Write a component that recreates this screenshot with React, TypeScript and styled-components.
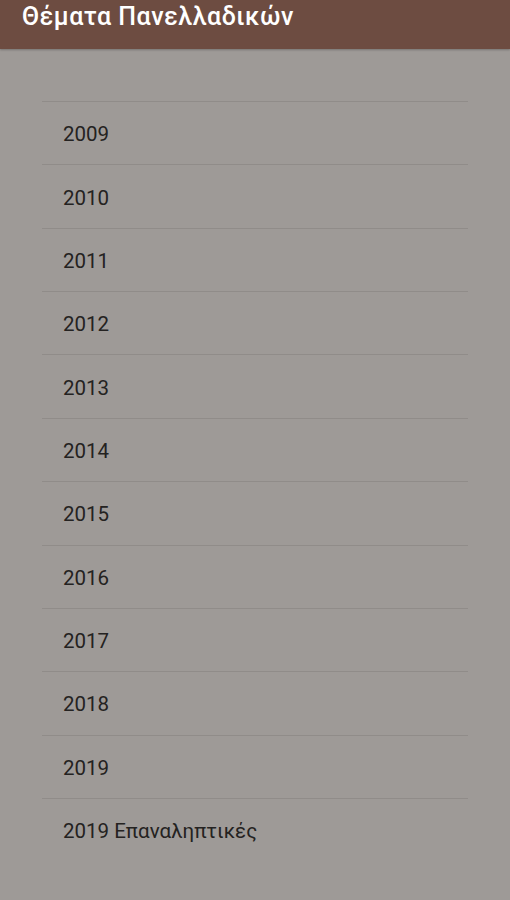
import React from "react";
import styled, { createGlobalStyle } from "styled-components";

const Global = createGlobalStyle`
  html, body { margin: 0; padding: 0; background: #9e9a97; }
  body { font-family: Roboto, "Noto Sans", sans-serif; }
`;

const Page = styled.div`
  width: 510px;
  min-height: 900px;
  background: #9e9a97;
  display: flex;
  flex-direction: column;
`;

const Toolbar = styled.header`
  height: 49px;
  background: #6d4c41;
  display: flex;
  align-items: flex-start;
  padding: 2px 22px 0;
  box-shadow: 0 1px 2px rgba(0, 0, 0, 0.25);
  box-sizing: border-box;
`;

const Title = styled.h1`
  margin: 0;
  color: #ffffff;
  font-size: 25px;
  font-weight: 500;
  letter-spacing: 0.5px;
  line-height: normal;
`;

const List = styled.ul`
  list-style: none;
  margin: 52px 42px 0;
  padding: 0;
`;

const Row = styled.li`
  height: 63.36px;
  border-top: 1px solid #908c89;
  display: flex;
  align-items: center;
  padding-left: 21px;
  padding-top: 2px;
  box-sizing: border-box;
  color: #242221;
  font-size: 20.5px;
`;

const items = [
  "2009", "2010", "2011", "2012", "2013", "2014", "2015",
  "2016", "2017", "2018", "2019", "2019 Επαναληπτικές",
];

export default function App() {
  return (
    <Page>
      <Global />
      <Toolbar>
        <Title>Θέματα Πανελλαδικών</Title>
      </Toolbar>
      <List>
        {items.map((t) => (
          <Row key={t}>{t}</Row>
        ))}
      </List>
    </Page>
  );
}
